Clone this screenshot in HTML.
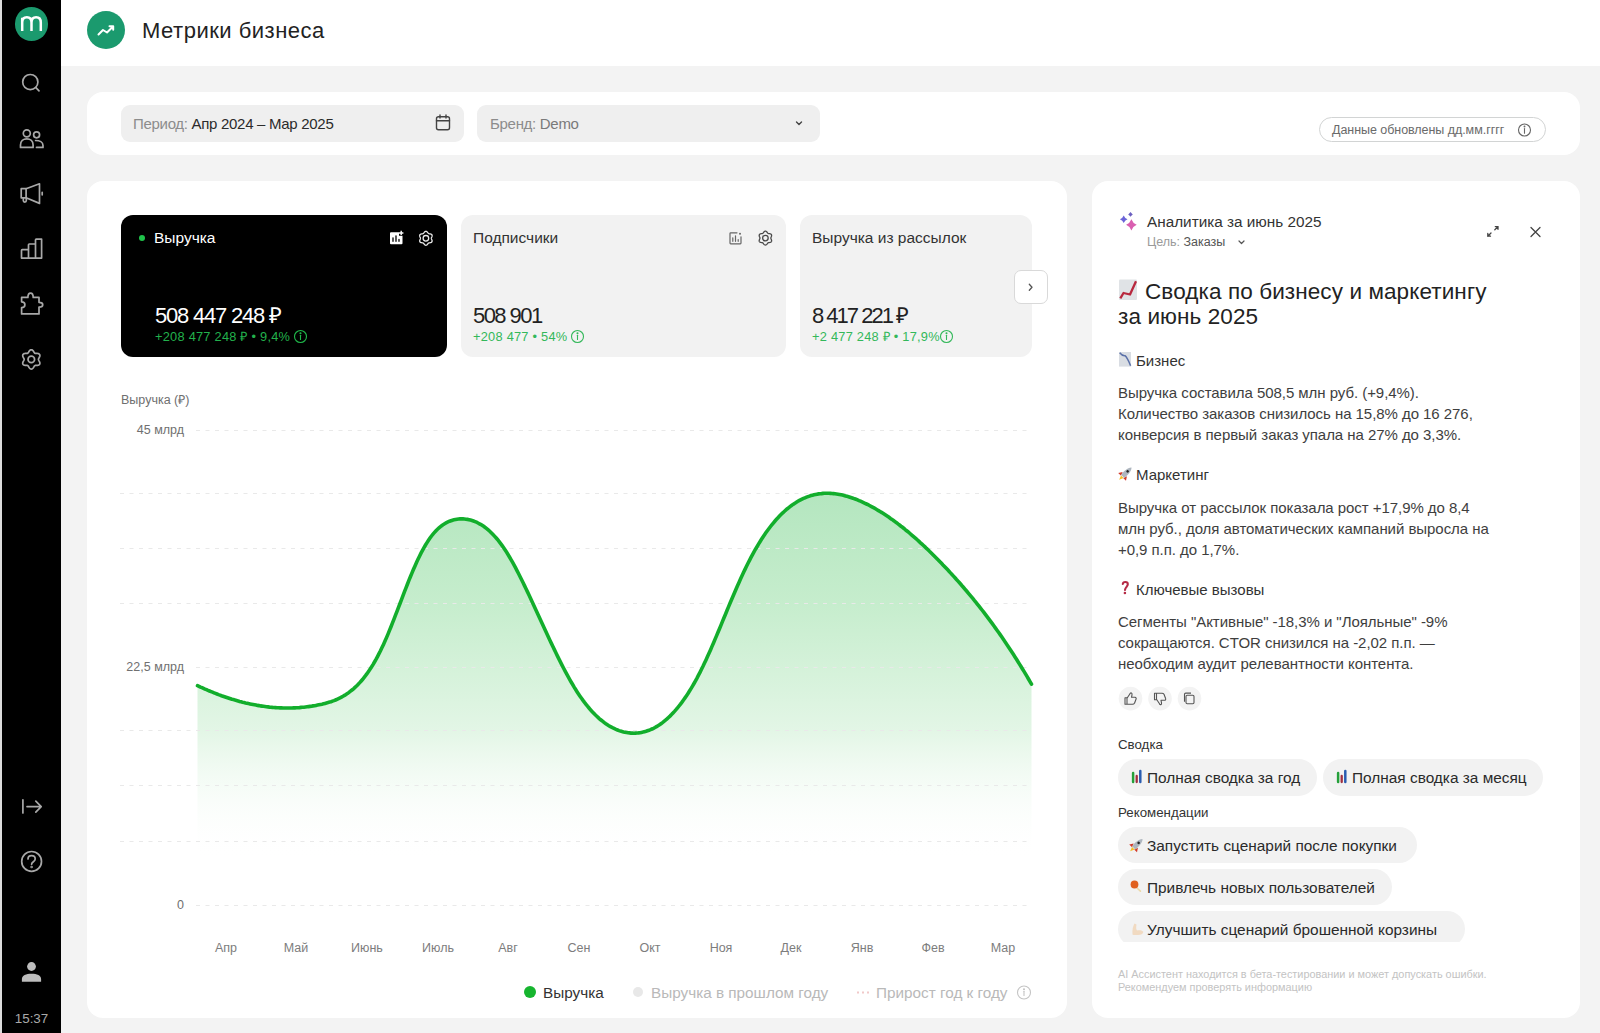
<!DOCTYPE html>
<html><head><meta charset="utf-8">
<style>
*{box-sizing:border-box;margin:0;padding:0}
html,body{width:1600px;height:1033px;overflow:hidden;background:#f3f3f3;font-family:"Liberation Sans",sans-serif;color:#1f1f1f}
.abs{position:absolute}
.card{position:absolute;background:#fff;border-radius:16px}
.t{position:absolute;white-space:nowrap;line-height:1}
svg{position:absolute;overflow:visible}
</style></head><body>
<div class="abs" style="left:0;top:0;width:2px;height:1033px;background:#dcdcdc"></div><div class="abs" style="left:2px;top:0;width:59px;height:1033px;background:#000"></div><div class="abs" style="left:61px;top:0;width:1539px;height:66px;background:#fff"></div><div class="abs" style="left:14.6px;top:6.8px;width:33.8px;height:33.8px;border-radius:50%;background:#1b9a6e"></div><svg style="left:0;top:0" width="61" height="60"><path d="M22.2,31 V17.8 M22.2,22.5 C22.2,19 24,17.3 26.85,17.3 C29.7,17.3 31.5,19 31.5,22.5 V31 M31.5,22.5 C31.5,19 33.3,17.3 36.15,17.3 C39,17.3 40.8,19 40.8,22.5 V31" fill="none" stroke="#fff" stroke-width="2.5" stroke-linecap="butt"/></svg><svg style="left:0;top:0" width="61" height="1033" fill="none" stroke="#a8a8a8" stroke-width="1.7" stroke-linecap="round" stroke-linejoin="round">
<circle cx="30.3" cy="82.1" r="7.6"/><path d="M35.9,87.6 L39,90.8"/>
<circle cx="26.8" cy="133.3" r="3.5"/><path d="M20.5,147.4 V145 C20.5,141.2 23.3,138.8 26.8,138.8 C30.3,138.8 33.1,141.2 33.1,145 V147.4 Z"/>
<circle cx="36.6" cy="134.8" r="3"/><path d="M35.6,140.5 C39.6,140.5 43,142.2 43,145.5 V147.4 H36.5"/>
<path d="M21.2,188.7 H26.1 V197.8 H21.2 Z M26.1,188.7 L39.5,183.8 V203.4 L26.1,197.8 M23.3,197.8 V200.5 C23.3,202.6 26.3,202.6 26.3,200.5 V199 M42.2,192.3 V194.8"/>
<path d="M21.5,258.1 V250.5 Q21.5,249.7 22.3,249.7 H28.5 V258.1 Z M28.5,258.1 V244.8 Q28.5,244 29.3,244 H35.5 V258.1 Z M35.5,258.1 V240 Q35.5,239.2 36.3,239.2 H41.6 V258.1 Z"/>
<path d="M21.6,297.4 H27.9 C27.9,291.6 33.2,291.6 33.2,297.4 H39 V302.3 C44,302.3 44,307.1 39,307.1 V313.9 H21.6 V307.6 C26,307.6 26,301.8 21.6,301.8 Z"/>
<path d="M31.30,349.75 L31.80,349.82 L32.28,350.04 L32.73,350.38 L33.13,350.81 L33.47,351.29 L33.78,351.78 L34.05,352.24 L34.31,352.65 L34.57,352.97 L34.88,353.21 L35.23,353.35 L35.64,353.42 L36.12,353.44 L36.66,353.44 L37.24,353.46 L37.83,353.52 L38.40,353.65 L38.91,353.87 L39.34,354.18 L39.66,354.57 L39.84,355.05 L39.90,355.57 L39.83,356.13 L39.66,356.68 L39.41,357.23 L39.14,357.73 L38.87,358.20 L38.65,358.63 L38.50,359.02 L38.45,359.40 L38.50,359.78 L38.65,360.17 L38.87,360.60 L39.14,361.07 L39.41,361.57 L39.66,362.12 L39.83,362.67 L39.90,363.23 L39.84,363.75 L39.66,364.22 L39.34,364.62 L38.91,364.93 L38.40,365.15 L37.83,365.28 L37.24,365.34 L36.66,365.36 L36.12,365.36 L35.64,365.38 L35.23,365.45 L34.88,365.59 L34.57,365.83 L34.31,366.15 L34.05,366.56 L33.78,367.02 L33.47,367.51 L33.13,367.99 L32.73,368.42 L32.28,368.76 L31.80,368.98 L31.30,369.05 L30.80,368.98 L30.32,368.76 L29.87,368.42 L29.47,367.99 L29.13,367.51 L28.82,367.02 L28.55,366.56 L28.29,366.15 L28.03,365.83 L27.73,365.59 L27.37,365.45 L26.96,365.38 L26.48,365.36 L25.94,365.36 L25.36,365.34 L24.77,365.28 L24.20,365.15 L23.69,364.93 L23.26,364.62 L22.94,364.22 L22.76,363.75 L22.70,363.23 L22.77,362.67 L22.94,362.12 L23.19,361.57 L23.46,361.07 L23.73,360.60 L23.95,360.17 L24.10,359.78 L24.15,359.40 L24.10,359.02 L23.95,358.63 L23.73,358.20 L23.46,357.73 L23.19,357.23 L22.94,356.68 L22.77,356.13 L22.70,355.57 L22.76,355.05 L22.94,354.57 L23.26,354.18 L23.69,353.87 L24.20,353.65 L24.77,353.52 L25.36,353.46 L25.94,353.44 L26.48,353.44 L26.96,353.42 L27.37,353.35 L27.73,353.21 L28.03,352.97 L28.29,352.65 L28.55,352.24 L28.82,351.78 L29.13,351.29 L29.47,350.81 L29.87,350.38 L30.32,350.04 L30.80,349.82 L31.30,349.75 Z"/>
<circle cx="31.3" cy="359.4" r="3.3"/>
<path d="M22.9,799.8 V813 M27,806.6 H41 M35.8,801.2 L41.2,806.6 L35.8,812.2"/>
<circle cx="31.6" cy="861.4" r="9.9"/><path d="M28,859 C28,854.6 35.2,854.6 35.2,859 C35.2,861.8 31.6,861.6 31.6,864.3"/><circle cx="31.6" cy="867" r="0.4" fill="#a8a8a8"/>
</svg><svg style="left:0;top:0" width="61" height="1033"><circle cx="31.5" cy="966.5" r="4.4" fill="#bdbdbd"/><path d="M21.9,981.7 V979 C21.9,975.5 26,973.7 31.5,973.7 C37,973.7 41.1,975.5 41.1,979 V981.7 Z" fill="#bdbdbd"/></svg><div class="t" style="left:-68.5px;width:200px;text-align:center;top:1011.9px;font-size:13.4px;color:#a9a9a9;">15:37</div>
<div class="abs" style="left:87px;top:11px;width:38px;height:38px;border-radius:50%;background:#1b9a6e"></div><svg style="left:0;top:0" width="200" height="66"><path d="M98.5,34.5 L103,30 L107,32.5 L113,26.5 M109.5,26.2 H113.2 V29.8" fill="none" stroke="#fff" stroke-width="2" stroke-linecap="round" stroke-linejoin="round"/></svg><div class="t" style="left:142px;top:19.7px;font-size:22px;color:#222;letter-spacing:0.5px">Метрики бизнеса</div>
<div class="card" style="left:87px;top:92px;width:1493px;height:63px"></div><div class="abs" style="left:121px;top:105px;width:343px;height:37px;border-radius:9px;background:#efefef"></div><div class="abs" style="left:477px;top:105px;width:343px;height:37px;border-radius:9px;background:#efefef"></div><div class="t" style="left:133px;top:116.1px;font-size:15px;color:#333;letter-spacing:-0.3px"><span style="color:#8c8c8c">Период:</span> <span style="color:#2b2b2b">Апр 2024 – Мар 2025</span></div>
<div class="t" style="left:490px;top:116.1px;font-size:15px;color:#333;letter-spacing:-0.3px"><span style="color:#8c8c8c">Бренд:</span> <span style="color:#7a7a7a">Demo</span></div>
<svg style="left:0;top:0" width="900" height="160" fill="none" stroke="#444" stroke-width="1.4" stroke-linecap="round" stroke-linejoin="round">
<rect x="436.5" y="116.8" width="13" height="13" rx="2"/><path d="M436.5,120.8 H449.5 M440,115 V118 M446,115 V118"/>
<path d="M796.5,122 L799,124.5 L801.5,122"/>
</svg><div class="abs" style="left:1319px;top:117px;width:227px;height:25px;border-radius:13px;border:1px solid #d2d4d4"></div><div class="t" style="left:1332px;top:124.2px;font-size:12.5px;color:#6a6a6a;letter-spacing:-0.05px">Данные обновлены дд.мм.гггг</div>
<svg style="left:0;top:0" width="1600" height="160" fill="none" stroke="#666" stroke-width="1.1"><circle cx="1524.5" cy="130" r="6"/><path d="M1524.5,128.5 V133.2" stroke-linecap="round"/><circle cx="1524.5" cy="126.5" r="0.4" fill="#666"/></svg><div class="card" style="left:87px;top:181px;width:980px;height:837px"></div><div class="abs" style="left:121px;top:215px;width:326px;height:142px;border-radius:12px;background:#000"></div><div class="abs" style="left:461px;top:215px;width:325px;height:142px;border-radius:12px;background:#f2f2f2"></div><div class="abs" style="left:800px;top:215px;width:232px;height:142px;border-radius:12px;background:#f2f2f2"></div><div class="abs" style="left:1014px;top:270px;width:33.5px;height:34px;border-radius:7px;background:#fff;border:1px solid #d9d9d9"></div><svg style="left:0;top:0" width="1100" height="400" fill="none" stroke="#555" stroke-width="1.3" stroke-linecap="round" stroke-linejoin="round"><path d="M1029.3,284.3 L1032,287.3 L1029.3,290.3"/></svg><div class="abs" style="left:139px;top:235px;width:6px;height:6px;border-radius:50%;background:#1fc24a"></div><div class="t" style="left:154px;top:230.4px;font-size:15.5px;color:#fff;">Выручка</div>
<div class="t" style="left:473px;top:230.4px;font-size:15.5px;color:#333;">Подписчики</div>
<div class="t" style="left:812px;top:230.4px;font-size:15.5px;color:#333;">Выручка из рассылок</div>
<div class="t" style="left:155px;top:304.6px;font-size:22px;color:#fff;letter-spacing:-1.2px">508 447 248 ₽</div>
<div class="t" style="left:473px;top:304.6px;font-size:22px;color:#222;letter-spacing:-1.55px">508 901</div>
<div class="t" style="left:812px;top:304.6px;font-size:22px;color:#222;letter-spacing:-2.0px">8 417 221 ₽</div>
<div class="t" style="left:155px;top:330.5px;font-size:12.8px;color:#22b14c;letter-spacing:0.25px">+208 477 248 ₽ • 9,4%</div>
<div class="t" style="left:473px;top:330.5px;font-size:12.8px;color:#33b85a;letter-spacing:0.25px">+208 477 • 54%</div>
<div class="t" style="left:812px;top:330.5px;font-size:12.8px;color:#33b85a;letter-spacing:0.25px">+2 477 248 ₽ • 17,9%</div>
<svg style="left:0;top:0" width="1" height="1" fill="none" stroke="#1fb84a" stroke-width="1.1"><circle cx="300.5" cy="336.5" r="6"/><path d="M300.5,335.2 V339.5" stroke-linecap="round"/><circle cx="300.5" cy="333.2" r="0.5" fill="#1fb84a"/></svg><svg style="left:0;top:0" width="1" height="1" fill="none" stroke="#33b85a" stroke-width="1.1"><circle cx="577.5" cy="336.5" r="6"/><path d="M577.5,335.2 V339.5" stroke-linecap="round"/><circle cx="577.5" cy="333.2" r="0.5" fill="#33b85a"/></svg><svg style="left:0;top:0" width="1" height="1" fill="none" stroke="#33b85a" stroke-width="1.1"><circle cx="946.5" cy="336.5" r="6"/><path d="M946.5,335.2 V339.5" stroke-linecap="round"/><circle cx="946.5" cy="333.2" r="0.5" fill="#33b85a"/></svg><svg style="left:0;top:0" width="1" height="1"><path d="M390.5,232.3 H399 V235.8 H402.5 V243.3 Q402.5,244.3 401.5,244.3 H391 Q390,244.3 390,243.3 V233.3 Q390,232.3 391,232.3 Z" fill="#fff"/><path d="M393,241.3 V237.8 M396,241.3 V235.8 M399,241.3 V239.5" stroke="#000" stroke-width="1.3" stroke-linecap="round"/><path d="M401.2,230.8 V235.10000000000002 M399,233.0 H403.4" stroke="#fff" stroke-width="1.4"/></svg><svg style="left:0;top:0" width="1" height="1" fill="none" stroke="#e8e8e8" stroke-width="1.3" stroke-linejoin="round"><path d="M425.90,231.35 L426.35,231.42 L426.78,231.63 L427.17,231.94 L427.50,232.31 L427.80,232.70 L428.07,233.06 L428.34,233.36 L428.62,233.58 L428.96,233.72 L429.35,233.80 L429.80,233.85 L430.28,233.92 L430.78,234.02 L431.24,234.20 L431.63,234.47 L431.92,234.83 L432.08,235.25 L432.12,235.72 L432.04,236.21 L431.89,236.70 L431.70,237.15 L431.52,237.56 L431.40,237.94 L431.35,238.30 L431.40,238.66 L431.52,239.04 L431.70,239.45 L431.89,239.90 L432.04,240.39 L432.12,240.88 L432.08,241.35 L431.92,241.78 L431.63,242.13 L431.24,242.40 L430.78,242.58 L430.28,242.68 L429.80,242.75 L429.35,242.80 L428.96,242.88 L428.62,243.02 L428.34,243.24 L428.07,243.54 L427.80,243.90 L427.50,244.29 L427.17,244.66 L426.78,244.97 L426.35,245.18 L425.90,245.25 L425.45,245.18 L425.02,244.97 L424.63,244.66 L424.30,244.29 L424.00,243.90 L423.73,243.54 L423.46,243.24 L423.17,243.02 L422.84,242.88 L422.45,242.80 L422.00,242.75 L421.52,242.68 L421.02,242.58 L420.56,242.40 L420.17,242.13 L419.88,241.78 L419.72,241.35 L419.68,240.88 L419.76,240.39 L419.91,239.90 L420.10,239.45 L420.28,239.04 L420.40,238.66 L420.45,238.30 L420.40,237.94 L420.28,237.56 L420.10,237.15 L419.91,236.70 L419.76,236.21 L419.68,235.72 L419.72,235.25 L419.88,234.83 L420.17,234.47 L420.56,234.20 L421.02,234.02 L421.52,233.92 L422.00,233.85 L422.45,233.80 L422.84,233.72 L423.17,233.58 L423.46,233.36 L423.73,233.06 L424.00,232.70 L424.30,232.31 L424.63,231.94 L425.02,231.63 L425.45,231.42 L425.90,231.35 Z"/><circle cx="425.9" cy="238.3" r="2.8"/></svg><svg style="left:0;top:0" width="1" height="1" fill="none" stroke="#666" stroke-width="1.2" stroke-linecap="round"><path d="M737.0,232.8 H730.7 Q730.0,232.8 730.0,233.5 V243.10000000000002 Q730.0,243.8 730.7,243.8 H740.3 Q741.0,243.8 741.0,243.10000000000002 V236.8"/><path d="M732.8,241.3 V237.8 M735.5,241.3 V235.8 M738.2,241.3 V239.5"/><circle cx="740.0" cy="233.8" r="1" fill="#666" stroke="none"/></svg><svg style="left:0;top:0" width="1" height="1" fill="none" stroke="#4a4a4a" stroke-width="1.3" stroke-linejoin="round"><path d="M765.40,231.15 L765.85,231.22 L766.28,231.43 L766.67,231.74 L767.00,232.11 L767.30,232.50 L767.57,232.86 L767.84,233.16 L768.12,233.38 L768.46,233.52 L768.85,233.60 L769.30,233.65 L769.78,233.72 L770.28,233.82 L770.74,234.00 L771.13,234.27 L771.42,234.62 L771.58,235.05 L771.62,235.52 L771.54,236.01 L771.39,236.50 L771.20,236.95 L771.02,237.36 L770.90,237.74 L770.85,238.10 L770.90,238.46 L771.02,238.84 L771.20,239.25 L771.39,239.70 L771.54,240.19 L771.62,240.68 L771.58,241.15 L771.42,241.57 L771.13,241.93 L770.74,242.20 L770.28,242.38 L769.78,242.48 L769.30,242.55 L768.85,242.60 L768.46,242.68 L768.12,242.82 L767.84,243.04 L767.57,243.34 L767.30,243.70 L767.00,244.09 L766.67,244.46 L766.28,244.77 L765.85,244.98 L765.40,245.05 L764.95,244.98 L764.52,244.77 L764.13,244.46 L763.80,244.09 L763.50,243.70 L763.23,243.34 L762.96,243.04 L762.67,242.82 L762.34,242.68 L761.95,242.60 L761.50,242.55 L761.02,242.48 L760.52,242.38 L760.06,242.20 L759.67,241.93 L759.38,241.57 L759.22,241.15 L759.18,240.68 L759.26,240.19 L759.41,239.70 L759.60,239.25 L759.78,238.84 L759.90,238.46 L759.95,238.10 L759.90,237.74 L759.78,237.36 L759.60,236.95 L759.41,236.50 L759.26,236.01 L759.18,235.52 L759.22,235.05 L759.38,234.62 L759.67,234.27 L760.06,234.00 L760.52,233.82 L761.02,233.72 L761.50,233.65 L761.95,233.60 L762.34,233.52 L762.67,233.38 L762.96,233.16 L763.23,232.86 L763.50,232.50 L763.80,232.11 L764.13,231.74 L764.52,231.43 L764.95,231.22 L765.40,231.15 Z"/><circle cx="765.4" cy="238.1" r="2.8"/></svg><div class="t" style="left:121px;top:393.9px;font-size:12.5px;color:#6f6f6f;">Выручка (₽)</div>
<div class="t" style="left:-116px;width:300px;text-align:right;top:423.9px;font-size:12.5px;color:#707070;">45 млрд</div>
<div class="t" style="left:-116px;width:300px;text-align:right;top:660.9px;font-size:12.5px;color:#707070;">22,5 млрд</div>
<div class="t" style="left:-116px;width:300px;text-align:right;top:898.9px;font-size:12.5px;color:#707070;">0</div>
<div class="t" style="left:126px;width:200px;text-align:center;top:941.9px;font-size:12.5px;color:#7d7d7d;">Апр</div>
<div class="t" style="left:196px;width:200px;text-align:center;top:941.9px;font-size:12.5px;color:#7d7d7d;">Май</div>
<div class="t" style="left:267px;width:200px;text-align:center;top:941.9px;font-size:12.5px;color:#7d7d7d;">Июнь</div>
<div class="t" style="left:338px;width:200px;text-align:center;top:941.9px;font-size:12.5px;color:#7d7d7d;">Июль</div>
<div class="t" style="left:408px;width:200px;text-align:center;top:941.9px;font-size:12.5px;color:#7d7d7d;">Авг</div>
<div class="t" style="left:479px;width:200px;text-align:center;top:941.9px;font-size:12.5px;color:#7d7d7d;">Сен</div>
<div class="t" style="left:550px;width:200px;text-align:center;top:941.9px;font-size:12.5px;color:#7d7d7d;">Окт</div>
<div class="t" style="left:621px;width:200px;text-align:center;top:941.9px;font-size:12.5px;color:#7d7d7d;">Ноя</div>
<div class="t" style="left:691px;width:200px;text-align:center;top:941.9px;font-size:12.5px;color:#7d7d7d;">Дек</div>
<div class="t" style="left:762px;width:200px;text-align:center;top:941.9px;font-size:12.5px;color:#7d7d7d;">Янв</div>
<div class="t" style="left:833px;width:200px;text-align:center;top:941.9px;font-size:12.5px;color:#7d7d7d;">Фев</div>
<div class="t" style="left:903px;width:200px;text-align:center;top:941.9px;font-size:12.5px;color:#7d7d7d;">Мар</div>
<svg style="left:0;top:0" width="1600" height="1033">
<defs><linearGradient id="fg" x1="0" y1="494" x2="0" y2="860" gradientUnits="userSpaceOnUse">
<stop offset="0" stop-color="#b4e6bf"/><stop offset="0.3" stop-color="#c6edcd"/><stop offset="0.65" stop-color="#e3f6e6"/><stop offset="1" stop-color="#ffffff" stop-opacity="0"/></linearGradient></defs>
<path d="M197.5,685.7 L199.0,686.4 L200.5,687.1 L202.0,687.7 L203.5,688.4 L205.0,689.1 L206.5,689.7 L208.0,690.4 L209.5,691.0 L211.0,691.6 L212.5,692.2 L214.0,692.8 L215.5,693.4 L217.0,694.0 L218.5,694.6 L220.0,695.1 L221.5,695.7 L223.0,696.2 L224.5,696.7 L226.0,697.2 L227.5,697.7 L229.0,698.2 L230.5,698.7 L232.0,699.2 L233.5,699.6 L235.0,700.1 L236.5,700.5 L238.0,700.9 L239.5,701.4 L241.0,701.8 L242.5,702.2 L244.0,702.5 L245.5,702.9 L247.0,703.2 L248.5,703.6 L250.0,703.9 L251.5,704.2 L253.0,704.5 L254.5,704.8 L256.0,705.1 L257.5,705.4 L259.0,705.6 L260.5,705.9 L262.0,706.1 L263.5,706.3 L265.0,706.5 L266.5,706.7 L268.0,706.9 L269.5,707.1 L271.0,707.2 L272.5,707.4 L274.0,707.5 L275.5,707.6 L277.0,707.7 L278.5,707.8 L280.0,707.9 L281.5,707.9 L283.0,708.0 L284.5,708.0 L286.0,708.0 L287.5,708.0 L289.0,708.0 L290.5,708.0 L292.0,708.0 L293.5,707.9 L295.0,707.9 L296.5,707.8 L298.0,707.7 L299.5,707.6 L301.0,707.4 L302.5,707.3 L304.0,707.2 L305.5,707.0 L307.0,706.8 L308.5,706.6 L310.0,706.4 L311.5,706.2 L313.0,705.9 L314.5,705.7 L316.0,705.4 L317.5,705.1 L319.0,704.8 L320.5,704.5 L322.0,704.2 L323.5,703.8 L325.0,703.4 L326.5,703.0 L328.0,702.6 L329.5,702.1 L331.0,701.7 L332.5,701.1 L334.0,700.6 L335.5,700.0 L337.0,699.3 L338.5,698.6 L340.0,697.9 L341.5,697.1 L343.0,696.3 L344.5,695.4 L346.0,694.5 L347.5,693.4 L349.0,692.4 L350.5,691.2 L352.0,690.0 L353.5,688.8 L355.0,687.4 L356.5,686.0 L358.0,684.5 L359.5,682.9 L361.0,681.2 L362.5,679.5 L364.0,677.6 L365.5,675.7 L367.0,673.7 L368.5,671.5 L370.0,669.3 L371.5,667.0 L373.0,664.6 L374.5,662.0 L376.0,659.4 L377.5,656.6 L379.0,653.7 L380.5,650.8 L382.0,647.6 L383.5,644.4 L385.0,641.1 L386.5,637.6 L388.0,634.1 L389.5,630.4 L391.0,626.7 L392.5,622.9 L394.0,619.1 L395.5,615.2 L397.0,611.3 L398.5,607.4 L400.0,603.5 L401.5,599.6 L403.0,595.6 L404.5,591.7 L406.0,587.9 L407.5,584.0 L409.0,580.2 L410.5,576.5 L412.0,572.9 L413.5,569.3 L415.0,565.9 L416.5,562.5 L418.0,559.3 L419.5,556.2 L421.0,553.2 L422.5,550.4 L424.0,547.6 L425.5,545.0 L427.0,542.6 L428.5,540.3 L430.0,538.1 L431.5,536.0 L433.0,534.1 L434.5,532.4 L436.0,530.7 L437.5,529.2 L439.0,527.9 L440.5,526.6 L442.0,525.5 L443.5,524.4 L445.0,523.5 L446.5,522.6 L448.0,521.9 L449.5,521.2 L451.0,520.7 L452.5,520.2 L454.0,519.8 L455.5,519.5 L457.0,519.2 L458.5,519.0 L460.0,518.9 L461.5,518.9 L463.0,518.9 L464.5,519.0 L466.0,519.2 L467.5,519.4 L469.0,519.7 L470.5,520.1 L472.0,520.5 L473.5,521.0 L475.0,521.6 L476.5,522.2 L478.0,523.0 L479.5,523.8 L481.0,524.6 L482.5,525.6 L484.0,526.6 L485.5,527.7 L487.0,528.9 L488.5,530.2 L490.0,531.5 L491.5,533.0 L493.0,534.5 L494.5,536.1 L496.0,537.8 L497.5,539.5 L499.0,541.4 L500.5,543.4 L502.0,545.4 L503.5,547.5 L505.0,549.8 L506.5,552.1 L508.0,554.5 L509.5,557.0 L511.0,559.6 L512.5,562.2 L514.0,564.9 L515.5,567.7 L517.0,570.6 L518.5,573.5 L520.0,576.5 L521.5,579.5 L523.0,582.5 L524.5,585.6 L526.0,588.8 L527.5,591.9 L529.0,595.1 L530.5,598.3 L532.0,601.5 L533.5,604.7 L535.0,608.0 L536.5,611.2 L538.0,614.5 L539.5,617.8 L541.0,621.0 L542.5,624.3 L544.0,627.5 L545.5,630.8 L547.0,634.0 L548.5,637.3 L550.0,640.5 L551.5,643.6 L553.0,646.8 L554.5,649.9 L556.0,653.0 L557.5,656.1 L559.0,659.1 L560.5,662.1 L562.0,665.1 L563.5,668.0 L565.0,670.9 L566.5,673.7 L568.0,676.4 L569.5,679.1 L571.0,681.8 L572.5,684.3 L574.0,686.9 L575.5,689.3 L577.0,691.7 L578.5,694.0 L580.0,696.2 L581.5,698.3 L583.0,700.4 L584.5,702.4 L586.0,704.3 L587.5,706.2 L589.0,708.0 L590.5,709.8 L592.0,711.4 L593.5,713.0 L595.0,714.6 L596.5,716.0 L598.0,717.4 L599.5,718.8 L601.0,720.0 L602.5,721.2 L604.0,722.4 L605.5,723.5 L607.0,724.5 L608.5,725.5 L610.0,726.4 L611.5,727.2 L613.0,728.0 L614.5,728.7 L616.0,729.4 L617.5,730.0 L619.0,730.6 L620.5,731.1 L622.0,731.5 L623.5,731.9 L625.0,732.2 L626.5,732.5 L628.0,732.8 L629.5,732.9 L631.0,733.1 L632.5,733.1 L634.0,733.2 L635.5,733.1 L637.0,733.0 L638.5,732.9 L640.0,732.7 L641.5,732.4 L643.0,732.1 L644.5,731.7 L646.0,731.3 L647.5,730.8 L649.0,730.3 L650.5,729.7 L652.0,729.0 L653.5,728.3 L655.0,727.5 L656.5,726.6 L658.0,725.7 L659.5,724.8 L661.0,723.7 L662.5,722.6 L664.0,721.4 L665.5,720.2 L667.0,718.9 L668.5,717.5 L670.0,716.1 L671.5,714.6 L673.0,713.0 L674.5,711.4 L676.0,709.7 L677.5,707.9 L679.0,706.0 L680.5,704.1 L682.0,702.1 L683.5,700.0 L685.0,697.9 L686.5,695.7 L688.0,693.4 L689.5,691.0 L691.0,688.6 L692.5,686.1 L694.0,683.5 L695.5,680.8 L697.0,678.1 L698.5,675.2 L700.0,672.3 L701.5,669.3 L703.0,666.3 L704.5,663.1 L706.0,659.9 L707.5,656.6 L709.0,653.3 L710.5,649.9 L712.0,646.4 L713.5,643.0 L715.0,639.4 L716.5,635.9 L718.0,632.3 L719.5,628.7 L721.0,625.1 L722.5,621.4 L724.0,617.8 L725.5,614.2 L727.0,610.5 L728.5,606.9 L730.0,603.3 L731.5,599.7 L733.0,596.2 L734.5,592.7 L736.0,589.2 L737.5,585.8 L739.0,582.4 L740.5,579.0 L742.0,575.8 L743.5,572.5 L745.0,569.4 L746.5,566.3 L748.0,563.2 L749.5,560.3 L751.0,557.4 L752.5,554.6 L754.0,551.9 L755.5,549.2 L757.0,546.7 L758.5,544.1 L760.0,541.7 L761.5,539.3 L763.0,537.0 L764.5,534.8 L766.0,532.6 L767.5,530.5 L769.0,528.5 L770.5,526.5 L772.0,524.6 L773.5,522.8 L775.0,521.0 L776.5,519.3 L778.0,517.7 L779.5,516.1 L781.0,514.6 L782.5,513.1 L784.0,511.7 L785.5,510.3 L787.0,509.0 L788.5,507.8 L790.0,506.6 L791.5,505.5 L793.0,504.4 L794.5,503.4 L796.0,502.5 L797.5,501.5 L799.0,500.7 L800.5,499.9 L802.0,499.1 L803.5,498.4 L805.0,497.8 L806.5,497.2 L808.0,496.6 L809.5,496.1 L811.0,495.6 L812.5,495.2 L814.0,494.8 L815.5,494.5 L817.0,494.2 L818.5,493.9 L820.0,493.7 L821.5,493.6 L823.0,493.4 L824.5,493.3 L826.0,493.3 L827.5,493.3 L829.0,493.3 L830.5,493.4 L832.0,493.5 L833.5,493.6 L835.0,493.8 L836.5,494.0 L838.0,494.2 L839.5,494.5 L841.0,494.8 L842.5,495.1 L844.0,495.5 L845.5,495.9 L847.0,496.3 L848.5,496.7 L850.0,497.2 L851.5,497.7 L853.0,498.2 L854.5,498.8 L856.0,499.3 L857.5,499.9 L859.0,500.6 L860.5,501.2 L862.0,501.9 L863.5,502.6 L865.0,503.3 L866.5,504.0 L868.0,504.7 L869.5,505.5 L871.0,506.3 L872.5,507.1 L874.0,507.9 L875.5,508.8 L877.0,509.7 L878.5,510.6 L880.0,511.5 L881.5,512.4 L883.0,513.3 L884.5,514.3 L886.0,515.3 L887.5,516.3 L889.0,517.3 L890.5,518.4 L892.0,519.4 L893.5,520.5 L895.0,521.6 L896.5,522.7 L898.0,523.9 L899.5,525.0 L901.0,526.2 L902.5,527.3 L904.0,528.5 L905.5,529.8 L907.0,531.0 L908.5,532.2 L910.0,533.5 L911.5,534.8 L913.0,536.1 L914.5,537.4 L916.0,538.7 L917.5,540.0 L919.0,541.4 L920.5,542.8 L922.0,544.1 L923.5,545.5 L925.0,546.9 L926.5,548.4 L928.0,549.8 L929.5,551.3 L931.0,552.7 L932.5,554.2 L934.0,555.7 L935.5,557.2 L937.0,558.7 L938.5,560.2 L940.0,561.8 L941.5,563.3 L943.0,564.9 L944.5,566.4 L946.0,568.0 L947.5,569.6 L949.0,571.2 L950.5,572.9 L952.0,574.5 L953.5,576.1 L955.0,577.8 L956.5,579.5 L958.0,581.1 L959.5,582.8 L961.0,584.5 L962.5,586.3 L964.0,588.0 L965.5,589.8 L967.0,591.5 L968.5,593.3 L970.0,595.1 L971.5,596.9 L973.0,598.7 L974.5,600.6 L976.0,602.4 L977.5,604.3 L979.0,606.2 L980.5,608.1 L982.0,610.0 L983.5,611.9 L985.0,613.9 L986.5,615.9 L988.0,617.9 L989.5,619.9 L991.0,621.9 L992.5,623.9 L994.0,626.0 L995.5,628.1 L997.0,630.2 L998.5,632.3 L1000.0,634.4 L1001.5,636.6 L1003.0,638.8 L1004.5,641.0 L1006.0,643.2 L1007.5,645.4 L1009.0,647.7 L1010.5,650.0 L1012.0,652.3 L1013.5,654.6 L1015.0,656.9 L1016.5,659.3 L1018.0,661.7 L1019.5,664.1 L1021.0,666.5 L1022.5,669.0 L1024.0,671.4 L1025.5,673.9 L1027.0,676.4 L1028.5,679.0 L1030.0,681.6 L1031.5,684.2 L1031.5,905 L197.5,905 Z" fill="url(#fg)"/>
<path d="M196,430.5 H1028" stroke="#e9e9e9" stroke-width="1" stroke-dasharray="4 5.5"/><path d="M120,493.5 H1028" stroke="#e9e9e9" stroke-width="1" stroke-dasharray="4 5.5"/><path d="M120,548.5 H1028" stroke="#e9e9e9" stroke-width="1" stroke-dasharray="4 5.5"/><path d="M120,603.5 H1028" stroke="#e9e9e9" stroke-width="1" stroke-dasharray="4 5.5"/><path d="M196,667.5 H1028" stroke="#e9e9e9" stroke-width="1" stroke-dasharray="4 5.5"/><path d="M120,730.5 H1028" stroke="#e9e9e9" stroke-width="1" stroke-dasharray="4 5.5"/><path d="M120,785.5 H1028" stroke="#e9e9e9" stroke-width="1" stroke-dasharray="4 5.5"/><path d="M120,841.5 H1028" stroke="#e9e9e9" stroke-width="1" stroke-dasharray="4 5.5"/><path d="M196,905.5 H1028" stroke="#e9e9e9" stroke-width="1" stroke-dasharray="4 5.5"/>
<path d="M197.5,685.7 L199.0,686.4 L200.5,687.1 L202.0,687.7 L203.5,688.4 L205.0,689.1 L206.5,689.7 L208.0,690.4 L209.5,691.0 L211.0,691.6 L212.5,692.2 L214.0,692.8 L215.5,693.4 L217.0,694.0 L218.5,694.6 L220.0,695.1 L221.5,695.7 L223.0,696.2 L224.5,696.7 L226.0,697.2 L227.5,697.7 L229.0,698.2 L230.5,698.7 L232.0,699.2 L233.5,699.6 L235.0,700.1 L236.5,700.5 L238.0,700.9 L239.5,701.4 L241.0,701.8 L242.5,702.2 L244.0,702.5 L245.5,702.9 L247.0,703.2 L248.5,703.6 L250.0,703.9 L251.5,704.2 L253.0,704.5 L254.5,704.8 L256.0,705.1 L257.5,705.4 L259.0,705.6 L260.5,705.9 L262.0,706.1 L263.5,706.3 L265.0,706.5 L266.5,706.7 L268.0,706.9 L269.5,707.1 L271.0,707.2 L272.5,707.4 L274.0,707.5 L275.5,707.6 L277.0,707.7 L278.5,707.8 L280.0,707.9 L281.5,707.9 L283.0,708.0 L284.5,708.0 L286.0,708.0 L287.5,708.0 L289.0,708.0 L290.5,708.0 L292.0,708.0 L293.5,707.9 L295.0,707.9 L296.5,707.8 L298.0,707.7 L299.5,707.6 L301.0,707.4 L302.5,707.3 L304.0,707.2 L305.5,707.0 L307.0,706.8 L308.5,706.6 L310.0,706.4 L311.5,706.2 L313.0,705.9 L314.5,705.7 L316.0,705.4 L317.5,705.1 L319.0,704.8 L320.5,704.5 L322.0,704.2 L323.5,703.8 L325.0,703.4 L326.5,703.0 L328.0,702.6 L329.5,702.1 L331.0,701.7 L332.5,701.1 L334.0,700.6 L335.5,700.0 L337.0,699.3 L338.5,698.6 L340.0,697.9 L341.5,697.1 L343.0,696.3 L344.5,695.4 L346.0,694.5 L347.5,693.4 L349.0,692.4 L350.5,691.2 L352.0,690.0 L353.5,688.8 L355.0,687.4 L356.5,686.0 L358.0,684.5 L359.5,682.9 L361.0,681.2 L362.5,679.5 L364.0,677.6 L365.5,675.7 L367.0,673.7 L368.5,671.5 L370.0,669.3 L371.5,667.0 L373.0,664.6 L374.5,662.0 L376.0,659.4 L377.5,656.6 L379.0,653.7 L380.5,650.8 L382.0,647.6 L383.5,644.4 L385.0,641.1 L386.5,637.6 L388.0,634.1 L389.5,630.4 L391.0,626.7 L392.5,622.9 L394.0,619.1 L395.5,615.2 L397.0,611.3 L398.5,607.4 L400.0,603.5 L401.5,599.6 L403.0,595.6 L404.5,591.7 L406.0,587.9 L407.5,584.0 L409.0,580.2 L410.5,576.5 L412.0,572.9 L413.5,569.3 L415.0,565.9 L416.5,562.5 L418.0,559.3 L419.5,556.2 L421.0,553.2 L422.5,550.4 L424.0,547.6 L425.5,545.0 L427.0,542.6 L428.5,540.3 L430.0,538.1 L431.5,536.0 L433.0,534.1 L434.5,532.4 L436.0,530.7 L437.5,529.2 L439.0,527.9 L440.5,526.6 L442.0,525.5 L443.5,524.4 L445.0,523.5 L446.5,522.6 L448.0,521.9 L449.5,521.2 L451.0,520.7 L452.5,520.2 L454.0,519.8 L455.5,519.5 L457.0,519.2 L458.5,519.0 L460.0,518.9 L461.5,518.9 L463.0,518.9 L464.5,519.0 L466.0,519.2 L467.5,519.4 L469.0,519.7 L470.5,520.1 L472.0,520.5 L473.5,521.0 L475.0,521.6 L476.5,522.2 L478.0,523.0 L479.5,523.8 L481.0,524.6 L482.5,525.6 L484.0,526.6 L485.5,527.7 L487.0,528.9 L488.5,530.2 L490.0,531.5 L491.5,533.0 L493.0,534.5 L494.5,536.1 L496.0,537.8 L497.5,539.5 L499.0,541.4 L500.5,543.4 L502.0,545.4 L503.5,547.5 L505.0,549.8 L506.5,552.1 L508.0,554.5 L509.5,557.0 L511.0,559.6 L512.5,562.2 L514.0,564.9 L515.5,567.7 L517.0,570.6 L518.5,573.5 L520.0,576.5 L521.5,579.5 L523.0,582.5 L524.5,585.6 L526.0,588.8 L527.5,591.9 L529.0,595.1 L530.5,598.3 L532.0,601.5 L533.5,604.7 L535.0,608.0 L536.5,611.2 L538.0,614.5 L539.5,617.8 L541.0,621.0 L542.5,624.3 L544.0,627.5 L545.5,630.8 L547.0,634.0 L548.5,637.3 L550.0,640.5 L551.5,643.6 L553.0,646.8 L554.5,649.9 L556.0,653.0 L557.5,656.1 L559.0,659.1 L560.5,662.1 L562.0,665.1 L563.5,668.0 L565.0,670.9 L566.5,673.7 L568.0,676.4 L569.5,679.1 L571.0,681.8 L572.5,684.3 L574.0,686.9 L575.5,689.3 L577.0,691.7 L578.5,694.0 L580.0,696.2 L581.5,698.3 L583.0,700.4 L584.5,702.4 L586.0,704.3 L587.5,706.2 L589.0,708.0 L590.5,709.8 L592.0,711.4 L593.5,713.0 L595.0,714.6 L596.5,716.0 L598.0,717.4 L599.5,718.8 L601.0,720.0 L602.5,721.2 L604.0,722.4 L605.5,723.5 L607.0,724.5 L608.5,725.5 L610.0,726.4 L611.5,727.2 L613.0,728.0 L614.5,728.7 L616.0,729.4 L617.5,730.0 L619.0,730.6 L620.5,731.1 L622.0,731.5 L623.5,731.9 L625.0,732.2 L626.5,732.5 L628.0,732.8 L629.5,732.9 L631.0,733.1 L632.5,733.1 L634.0,733.2 L635.5,733.1 L637.0,733.0 L638.5,732.9 L640.0,732.7 L641.5,732.4 L643.0,732.1 L644.5,731.7 L646.0,731.3 L647.5,730.8 L649.0,730.3 L650.5,729.7 L652.0,729.0 L653.5,728.3 L655.0,727.5 L656.5,726.6 L658.0,725.7 L659.5,724.8 L661.0,723.7 L662.5,722.6 L664.0,721.4 L665.5,720.2 L667.0,718.9 L668.5,717.5 L670.0,716.1 L671.5,714.6 L673.0,713.0 L674.5,711.4 L676.0,709.7 L677.5,707.9 L679.0,706.0 L680.5,704.1 L682.0,702.1 L683.5,700.0 L685.0,697.9 L686.5,695.7 L688.0,693.4 L689.5,691.0 L691.0,688.6 L692.5,686.1 L694.0,683.5 L695.5,680.8 L697.0,678.1 L698.5,675.2 L700.0,672.3 L701.5,669.3 L703.0,666.3 L704.5,663.1 L706.0,659.9 L707.5,656.6 L709.0,653.3 L710.5,649.9 L712.0,646.4 L713.5,643.0 L715.0,639.4 L716.5,635.9 L718.0,632.3 L719.5,628.7 L721.0,625.1 L722.5,621.4 L724.0,617.8 L725.5,614.2 L727.0,610.5 L728.5,606.9 L730.0,603.3 L731.5,599.7 L733.0,596.2 L734.5,592.7 L736.0,589.2 L737.5,585.8 L739.0,582.4 L740.5,579.0 L742.0,575.8 L743.5,572.5 L745.0,569.4 L746.5,566.3 L748.0,563.2 L749.5,560.3 L751.0,557.4 L752.5,554.6 L754.0,551.9 L755.5,549.2 L757.0,546.7 L758.5,544.1 L760.0,541.7 L761.5,539.3 L763.0,537.0 L764.5,534.8 L766.0,532.6 L767.5,530.5 L769.0,528.5 L770.5,526.5 L772.0,524.6 L773.5,522.8 L775.0,521.0 L776.5,519.3 L778.0,517.7 L779.5,516.1 L781.0,514.6 L782.5,513.1 L784.0,511.7 L785.5,510.3 L787.0,509.0 L788.5,507.8 L790.0,506.6 L791.5,505.5 L793.0,504.4 L794.5,503.4 L796.0,502.5 L797.5,501.5 L799.0,500.7 L800.5,499.9 L802.0,499.1 L803.5,498.4 L805.0,497.8 L806.5,497.2 L808.0,496.6 L809.5,496.1 L811.0,495.6 L812.5,495.2 L814.0,494.8 L815.5,494.5 L817.0,494.2 L818.5,493.9 L820.0,493.7 L821.5,493.6 L823.0,493.4 L824.5,493.3 L826.0,493.3 L827.5,493.3 L829.0,493.3 L830.5,493.4 L832.0,493.5 L833.5,493.6 L835.0,493.8 L836.5,494.0 L838.0,494.2 L839.5,494.5 L841.0,494.8 L842.5,495.1 L844.0,495.5 L845.5,495.9 L847.0,496.3 L848.5,496.7 L850.0,497.2 L851.5,497.7 L853.0,498.2 L854.5,498.8 L856.0,499.3 L857.5,499.9 L859.0,500.6 L860.5,501.2 L862.0,501.9 L863.5,502.6 L865.0,503.3 L866.5,504.0 L868.0,504.7 L869.5,505.5 L871.0,506.3 L872.5,507.1 L874.0,507.9 L875.5,508.8 L877.0,509.7 L878.5,510.6 L880.0,511.5 L881.5,512.4 L883.0,513.3 L884.5,514.3 L886.0,515.3 L887.5,516.3 L889.0,517.3 L890.5,518.4 L892.0,519.4 L893.5,520.5 L895.0,521.6 L896.5,522.7 L898.0,523.9 L899.5,525.0 L901.0,526.2 L902.5,527.3 L904.0,528.5 L905.5,529.8 L907.0,531.0 L908.5,532.2 L910.0,533.5 L911.5,534.8 L913.0,536.1 L914.5,537.4 L916.0,538.7 L917.5,540.0 L919.0,541.4 L920.5,542.8 L922.0,544.1 L923.5,545.5 L925.0,546.9 L926.5,548.4 L928.0,549.8 L929.5,551.3 L931.0,552.7 L932.5,554.2 L934.0,555.7 L935.5,557.2 L937.0,558.7 L938.5,560.2 L940.0,561.8 L941.5,563.3 L943.0,564.9 L944.5,566.4 L946.0,568.0 L947.5,569.6 L949.0,571.2 L950.5,572.9 L952.0,574.5 L953.5,576.1 L955.0,577.8 L956.5,579.5 L958.0,581.1 L959.5,582.8 L961.0,584.5 L962.5,586.3 L964.0,588.0 L965.5,589.8 L967.0,591.5 L968.5,593.3 L970.0,595.1 L971.5,596.9 L973.0,598.7 L974.5,600.6 L976.0,602.4 L977.5,604.3 L979.0,606.2 L980.5,608.1 L982.0,610.0 L983.5,611.9 L985.0,613.9 L986.5,615.9 L988.0,617.9 L989.5,619.9 L991.0,621.9 L992.5,623.9 L994.0,626.0 L995.5,628.1 L997.0,630.2 L998.5,632.3 L1000.0,634.4 L1001.5,636.6 L1003.0,638.8 L1004.5,641.0 L1006.0,643.2 L1007.5,645.4 L1009.0,647.7 L1010.5,650.0 L1012.0,652.3 L1013.5,654.6 L1015.0,656.9 L1016.5,659.3 L1018.0,661.7 L1019.5,664.1 L1021.0,666.5 L1022.5,669.0 L1024.0,671.4 L1025.5,673.9 L1027.0,676.4 L1028.5,679.0 L1030.0,681.6 L1031.5,684.2" fill="none" stroke="#12ae2c" stroke-width="3.6" stroke-linecap="round"/>
</svg><div class="abs" style="left:524px;top:986px;width:12px;height:12px;border-radius:50%;background:#16b52f"></div><div class="t" style="left:543px;top:985.0px;font-size:15.3px;color:#333;">Выручка</div>
<div class="abs" style="left:633px;top:987px;width:10px;height:10px;border-radius:50%;background:#e8e8e8"></div><div class="t" style="left:651px;top:985.0px;font-size:15.3px;color:#b9b9b9;">Выручка в прошлом году</div>
<svg style="left:0;top:0" width="1100" height="1033"><path d="M857,992.5 H870" stroke="#f1c9c9" stroke-width="2" stroke-dasharray="2 3"/></svg><div class="t" style="left:876px;top:985.0px;font-size:15.3px;color:#b9b9b9;">Прирост год к году</div>
<svg style="left:0;top:0" width="1" height="1" fill="none" stroke="#c4c4c4" stroke-width="1.1"><circle cx="1024" cy="992.5" r="6.5"/><path d="M1024,991.2 V995.5" stroke-linecap="round"/><circle cx="1024" cy="989.2" r="0.5" fill="#c4c4c4"/></svg><div class="card" style="left:1092px;top:181px;width:488px;height:837px"></div><svg style="left:0;top:0" width="1"><path d="M1123.7,215.39999999999998 Q1124.7640000000001,218.136 1127.5,219.2 Q1124.7640000000001,220.26399999999998 1123.7,223.0 Q1122.636,220.26399999999998 1119.9,219.2 Q1122.636,218.136 1123.7,215.39999999999998 Z" fill="#6a63d8"/><path d="M1131.4,219.20000000000002 Q1132.884,223.232 1136.7,224.8 Q1132.884,226.36800000000002 1131.4,230.4 Q1129.9160000000002,226.36800000000002 1126.1000000000001,224.8 Q1129.9160000000002,223.232 1131.4,219.20000000000002 Z" fill="#d95fb0"/><path d="M1130.5,212.1 Q1131.535,213.365 1132.8,214.4 Q1131.535,215.435 1130.5,216.70000000000002 Q1129.465,215.435 1128.2,214.4 Q1129.465,213.365 1130.5,212.1 Z" fill="#6b5fc0"/></svg><div class="t" style="left:1147px;top:213.5px;font-size:15.3px;color:#333;">Аналитика за июнь 2025</div>
<div class="t" style="left:1147px;top:235.9px;font-size:12.5px;color:#333;"><span style="color:#9a9a9a">Цель:</span> <span style="color:#555">Заказы</span></div>
<svg style="left:0;top:0" width="1" fill="none" stroke="#555" stroke-width="1.2" stroke-linecap="round" stroke-linejoin="round"><path d="M1239,241 L1241.5,243.5 L1244,241"/></svg><svg style="left:0;top:0" width="1" fill="none" stroke="#444" stroke-width="1.3" stroke-linecap="round"><path d="M1494.8,229.8 L1498,226.6 M1495.3,226.6 H1498 V229.3 M1491,233 L1487.8,236.2 M1487.8,233.5 V236.2 H1490.5"/><path d="M1531,227.5 L1540,236.5 M1540,227.5 L1531,236.5"/></svg><svg style="left:0;top:0" width="1"><rect x="1119" y="279.5" width="18" height="20.5" rx="1" fill="#e0e3e6"/><path d="M1120.3,298.3 L1123.5,293 L1130,294.5 L1136,281.2" fill="none" stroke="#b8283e" stroke-width="2.3" stroke-linejoin="round"/></svg><div class="t" style="left:1145px;top:280.5px;font-size:22.5px;color:#222;letter-spacing:0.1px">Сводка по бизнесу и маркетингу</div>
<div class="t" style="left:1118px;top:305.5px;font-size:22.5px;color:#222;letter-spacing:0.1px">за июнь 2025</div>
<svg style="left:0;top:0" width="1"><rect x="1119" y="352" width="12" height="14.6" fill="#d9dde3"/><path d="M1119.7,352.7 C1122,355.5 1123,356 1125,355.7 C1127,357 1129,362 1130.6,365.7" fill="none" stroke="#5a70a8" stroke-width="1.5"/></svg><div class="t" style="left:1136px;top:352.6px;font-size:15px;color:#333;">Бизнес</div>
<div class="t" style="left:1118px;top:385.3px;font-size:15px;color:#3e3e3e;letter-spacing:-0.05px">Выручка составила 508,5 млн руб. (+9,4%).</div>
<div class="t" style="left:1118px;top:406.3px;font-size:15px;color:#3e3e3e;letter-spacing:-0.05px">Количество заказов снизилось на 15,8% до 16 276,</div>
<div class="t" style="left:1118px;top:427.3px;font-size:15px;color:#3e3e3e;letter-spacing:-0.05px">конверсия в первый заказ упала на 27% до 3,3%.</div>
<svg style="left:0;top:0" width="1"><g transform="translate(1125.5,473.5) rotate(45)"><path d="M-5.5,1.8 L-3,-2 L-1.5,1.8 Z M5.5,1.8 L3,-2 L1.5,1.8Z" fill="#d23a2a" transform="translate(0,3)"/><path d="M0,-8.5 C2.8,-6 2.8,0 2.2,4 H-2.2 C-2.8,0 -2.8,-6 0,-8.5 Z" fill="#aeb6bf"/><circle cx="0" cy="-3" r="1.3" fill="#222"/><path d="M-1.8,4.5 L0,9 L1.8,4.5 Z" fill="#f5c02a"/></g></svg><div class="t" style="left:1136px;top:466.6px;font-size:15px;color:#333;">Маркетинг</div>
<div class="t" style="left:1118px;top:500.3px;font-size:15px;color:#3e3e3e;letter-spacing:-0.05px">Выручка от рассылок показала рост +17,9% до 8,4</div>
<div class="t" style="left:1118px;top:521.3px;font-size:15px;color:#3e3e3e;letter-spacing:-0.05px">млн руб., доля автоматических кампаний выросла на</div>
<div class="t" style="left:1118px;top:542.3px;font-size:15px;color:#3e3e3e;letter-spacing:-0.05px">+0,9 п.п. до 1,7%.</div>
<svg style="left:0;top:0" width="1"><path d="M1122.8,584 C1123,581.5 1127.8,581.2 1127.8,584.3 C1127.8,586.5 1125.2,587.2 1125,590" fill="none" stroke="#b52a45" stroke-width="2.1" stroke-linecap="round"/><circle cx="1124.9" cy="593" r="1.3" fill="#b52a45"/></svg><div class="t" style="left:1136px;top:581.6px;font-size:15px;color:#333;">Ключевые вызовы</div>
<div class="t" style="left:1118px;top:614.3px;font-size:15px;color:#3e3e3e;letter-spacing:-0.05px">Сегменты "Активные" -18,3% и "Лояльные" -9%</div>
<div class="t" style="left:1118px;top:635.3px;font-size:15px;color:#3e3e3e;letter-spacing:-0.05px">сокращаются. CTOR снизился на -2,02 п.п. —</div>
<div class="t" style="left:1118px;top:656.3px;font-size:15px;color:#3e3e3e;letter-spacing:-0.05px">необходим аудит релевантности контента.</div>
<svg style="left:0;top:0" width="1"><circle cx="1130.5" cy="698.6" r="11.8" fill="#f3f3f3"/><circle cx="1160" cy="698.6" r="11.8" fill="#f3f3f3"/><circle cx="1189.5" cy="698.6" r="11.8" fill="#f3f3f3"/><g fill="none" stroke="#555" stroke-width="1.1" stroke-linejoin="round" transform="translate(0,0.8)"><path d="M1125,697 H1127 V703.5 H1125 Z M1127,697.5 L1130,693 C1130.5,691.5 1132.5,692 1132,694 L1131.5,696.5 H1135 C1136,696.5 1136.5,697.5 1136,698.5 L1134.5,702.5 C1134,703.3 1133.5,703.5 1132.5,703.5 H1127"/><path d="M1154.5,699 H1156.5 V692.5 H1154.5 Z M1156.5,698.5 L1159.5,703 C1160,704.5 1162,704 1161.5,702 L1161,699.5 H1164.5 C1165.5,699.5 1166,698.5 1165.5,697.5 L1164,693.5 C1163.5,692.7 1163,692.5 1162,692.5 H1156.5"/><rect x="1186" y="694.5" width="8" height="8.5" rx="1.2"/><path d="M1184.5,701 V693.5 C1184.5,692.8 1185,692.3 1185.7,692.3 H1191"/></g></svg><div class="t" style="left:1118px;top:738.2px;font-size:13.3px;color:#333;">Сводка</div>
<div class="t" style="left:1118px;top:806.2px;font-size:13.3px;color:#333;">Рекомендации</div>
<div class="abs" style="left:1118px;top:759px;width:199px;height:37px;border-radius:18.5px;background:#f2f2f2"></div><svg style="left:0;top:0" width="1"><path d="M1133.1000000000001,782.0 V773.0" stroke="#24a03a" stroke-width="2.5" stroke-linecap="round"/><path d="M1136.7,782.0 V776.0" stroke="#a03040" stroke-width="2.3" stroke-linecap="round"/><path d="M1140.3000000000002,782.0 V771.0" stroke="#2a5cb0" stroke-width="2.5" stroke-linecap="round"/></svg><div class="t" style="left:1147px;top:770.0px;font-size:15.4px;color:#2a2a2a;">Полная сводка за год</div>
<div class="abs" style="left:1323px;top:759px;width:220px;height:37px;border-radius:18.5px;background:#f2f2f2"></div><svg style="left:0;top:0" width="1"><path d="M1338.1000000000001,782.0 V773.0" stroke="#24a03a" stroke-width="2.5" stroke-linecap="round"/><path d="M1341.7,782.0 V776.0" stroke="#a03040" stroke-width="2.3" stroke-linecap="round"/><path d="M1345.3000000000002,782.0 V771.0" stroke="#2a5cb0" stroke-width="2.5" stroke-linecap="round"/></svg><div class="t" style="left:1352px;top:770.0px;font-size:15.4px;color:#2a2a2a;">Полная сводка за месяц</div>
<div class="abs" style="left:1118px;top:827px;width:299px;height:36px;border-radius:18.0px;background:#f2f2f2"></div><svg style="left:0;top:0" width="1"><g transform="translate(1136.5,845) rotate(45)"><path d="M-5.5,1.8 L-3,-2 L-1.5,1.8 Z M5.5,1.8 L3,-2 L1.5,1.8Z" fill="#d23a2a" transform="translate(0,3)"/><path d="M0,-8.5 C2.8,-6 2.8,0 2.2,4 H-2.2 C-2.8,0 -2.8,-6 0,-8.5 Z" fill="#aeb6bf"/><circle cx="0" cy="-3" r="1.3" fill="#222"/><path d="M-1.8,4.5 L0,9 L1.8,4.5 Z" fill="#f5c02a"/></g></svg><div class="t" style="left:1147px;top:837.5px;font-size:15.4px;color:#2a2a2a;">Запустить сценарий после покупки</div>
<div class="abs" style="left:1118px;top:869px;width:274px;height:36px;border-radius:18.0px;background:#f2f2f2"></div><svg style="left:0;top:0" width="1"><path d="M1137,888 L1140.4,891.2" stroke="#ecd9a8" stroke-width="1.6" stroke-linecap="round"/><circle cx="1134.5" cy="884.5" r="3.9" fill="#e0601e"/></svg><div class="t" style="left:1147px;top:879.5px;font-size:15.4px;color:#2a2a2a;">Привлечь новых пользователей</div>
<div class="abs" style="left:1118px;top:911px;width:347px;height:36px;border-radius:18.0px;background:#f2f2f2"></div><svg style="left:0;top:0" width="1" opacity="0.75"><path d="M1132.5,934.5 C1132,930 1133,926 1134.5,923.5 L1136.5,924.5 C1136,927 1136,929.5 1137,930.5 C1139.5,929.8 1142.5,930.2 1143.3,932 C1143,934 1141,935 1138,935 H1133.5 Z" fill="#f0d2b0"/></svg><div class="t" style="left:1147px;top:921.5px;font-size:15.4px;color:#2a2a2a;">Улучшить сценарий брошенной корзины</div>
<div class="abs" style="left:1110px;top:942px;width:400px;height:8px;background:#fff"></div><div class="t" style="left:1118px;top:969.3px;font-size:10.9px;color:#c3c3c3;">AI Ассистент находится в бета-тестировании и может допускать ошибки.</div>
<div class="t" style="left:1118px;top:982.3px;font-size:10.9px;color:#c3c3c3;">Рекомендуем проверять информацию</div>
</body></html>
